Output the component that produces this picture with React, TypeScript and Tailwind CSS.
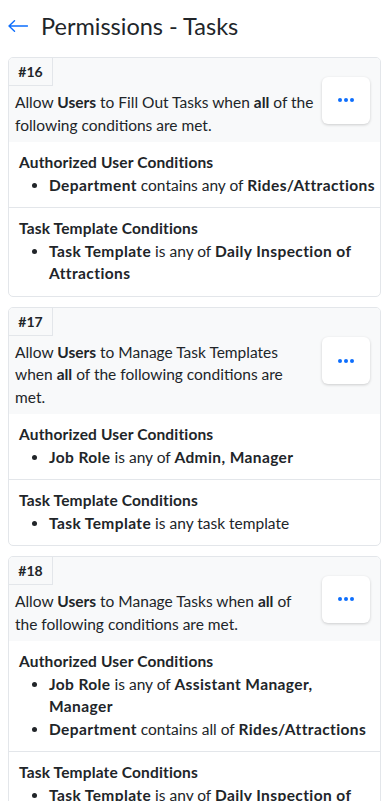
import React from "react";

type Cond = { title: string; items: React.ReactNode[] };
type Rule = { id: string; text: React.ReactNode; sections: Cond[] };

const B = ({ children }: { children: React.ReactNode }) => (
  <span className="font-bold">{children}</span>
);
const BS = ({ children }: { children: React.ReactNode }) => (
  <span className="font-bold tracking-[0.4px]">{children}</span>
);

const rules: Rule[] = [
  {
    id: "#16",
    text: (
      <>
        Allow <B>Users</B> to Fill Out Tasks when <B>all</B> of the following conditions are met.
      </>
    ),
    sections: [
      {
        title: "Authorized User Conditions",
        items: [
          <>
            <BS>Department</BS> contains any of <BS>Rides/Attractions</BS>
          </>,
        ],
      },
      {
        title: "Task Template Conditions",
        items: [
          <>
            <BS>Task Template</BS> is any of <BS>Daily Inspection of Attractions</BS>
          </>,
        ],
      },
    ],
  },
  {
    id: "#17",
    text: (
      <>
        Allow <B>Users</B> to Manage Task Templates when <B>all</B> of the following conditions are met.
      </>
    ),
    sections: [
      {
        title: "Authorized User Conditions",
        items: [
          <>
            <BS>Job Role</BS> is any of <BS>Admin, Manager</BS>
          </>,
        ],
      },
      {
        title: "Task Template Conditions",
        items: [
          <>
            <BS>Task Template</BS> is any task template
          </>,
        ],
      },
    ],
  },
  {
    id: "#18",
    text: (
      <>
        Allow <B>Users</B> to Manage Tasks when <B>all</B> of the following conditions are met.
      </>
    ),
    sections: [
      {
        title: "Authorized User Conditions",
        items: [
          <>
            <BS>Job Role</BS> is any of <BS>Assistant Manager, Manager</BS>
          </>,
          <>
            <BS>Department</BS> contains all of <BS>Rides/Attractions</BS>
          </>,
        ],
      },
      {
        title: "Task Template Conditions",
        items: [
          <>
            <BS>Task Template</BS> is any of <BS>Daily Inspection of Attractions</BS>
          </>,
        ],
      },
    ],
  },
];

function Card({ rule }: { rule: Rule }) {
  return (
    <div className="border border-[#e3e6ea] rounded-[5px] overflow-hidden bg-white">
      <div className="flex items-center bg-[#f8f9fa]">
        <div className="flex-1 min-w-0">
          <div className="w-[44px] h-[28px] flex items-center justify-center border-r border-b border-[#e3e6ea] text-[14px] font-bold">
            {rule.id}
          </div>
          <div className="pl-[6px] pr-[2px] pt-[5px] pb-[6px] text-[15.5px] leading-[22.5px]">
            {rule.text}
          </div>
        </div>
        <button className="w-[48px] h-[47px] mr-[10px] ml-[6px] shrink-0 bg-white rounded-[6px] shadow-[0_1px_3px_rgba(0,0,0,0.18)] flex items-center justify-center gap-[2px]">
          <span className="w-[4px] h-[4px] rounded-full bg-[#0d6efd]" />
          <span className="w-[4px] h-[4px] rounded-full bg-[#0d6efd]" />
          <span className="w-[4px] h-[4px] rounded-full bg-[#0d6efd]" />
        </button>
      </div>
      {rule.sections.map((s, i) => (
        <div
          key={i}
          className={`pl-[10px] pr-[5px] pt-[9px] pb-[11px] ${i > 0 ? "border-t border-[#e3e6ea]" : ""}`}
        >
          <div className="font-bold text-[15.5px] leading-[22.5px] tracking-[0.15px]">{s.title}</div>
          <ul className="list-disc pl-[30px] text-[15.5px] leading-[22.5px]">
            {s.items.map((it, j) => (
              <li key={j}>{it}</li>
            ))}
          </ul>
        </div>
      ))}
    </div>
  );
}

export default function App() {
  return (
    <div
      className="min-h-screen bg-white text-[#212529] px-[8px]"
      style={{ fontFamily: 'Lato, sans-serif' }}
    >
      <div className="flex items-center h-[57px] pb-[6px]">
        <svg width="20" height="12" viewBox="0 0 20 12">
          <path d="M19.5 6H1M6.5 0.8L1 6l5.5 5.2" stroke="#0d6efd" strokeWidth="1.4" fill="none" strokeLinecap="round" strokeLinejoin="round" />
        </svg>
        <h1 className="ml-[13px] text-[23.5px] leading-[30px] font-normal">Permissions - Tasks</h1>
      </div>
      <div className="flex flex-col gap-[10px]">
        {rules.map((r) => (
          <Card key={r.id} rule={r} />
        ))}
      </div>
    </div>
  );
}
